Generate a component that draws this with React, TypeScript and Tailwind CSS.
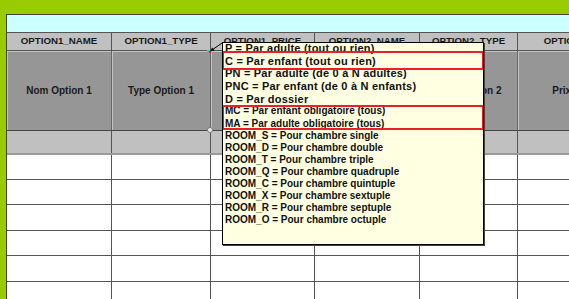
import React from "react";

const cols = [105, 99, 104, 105, 98, 130];
const headers = ["OPTION1_NAME", "OPTION1_TYPE", "OPTION1_PRICE", "OPTION2_NAME", "OPTION2_TYPE", "OPTION2_PRICE"];
const grayCells = ["Nom Option 1", "Type Option 1", "Prix option 1", "Nom Option 2", "Type Option 2", "Prix option 2"];
const whiteRows = [25, 25, 26, 25, 26, 26];

const topLines = [
  "P = Par adulte (tout ou rien)",
  "C = Par enfant (tout ou rien)",
  "PN = Par adulte (de 0 à N adultes)",
  "PNC = Par enfant (de 0 à N enfants)",
  "D = Par dossier",
];
const midLines = ["MC = Par enfant obligatoire (tous)", "MA = Par adulte obligatoire (tous)"];
const roomLines = [
  "ROOM_S = Pour chambre single",
  "ROOM_D = Pour chambre double",
  "ROOM_T = Pour chambre triple",
  "ROOM_Q = Pour chambre quadruple",
  "ROOM_C = Pour chambre quintuple",
  "ROOM_X = Pour chambre sextuple",
  "ROOM_R = Pour chambre septuple",
  "ROOM_O = Pour chambre octuple",
];

export default function App() {
  return (
    <div
      className="relative w-[569px] h-[299px] overflow-hidden bg-[#99cc00] pt-[14px] pl-[6px]"
      style={{ fontFamily: '"Liberation Sans", Arial, sans-serif' }}
    >
      <div className="h-full border-l border-t border-[#444] bg-white overflow-hidden">
        <div className="h-[18px] bg-[#ccffff] border-b border-[#555]" />
        {/* header */}
        <div className="flex h-[18px] border-b border-[#555] bg-[#c0c0c0]">
          {cols.map((w, i) => (
            <div
              key={i}
              style={{ width: w }}
              className="shrink-0 border-r border-[#555] flex items-center justify-center text-[9.7px] font-bold text-[#1a1a1a] whitespace-nowrap overflow-hidden"
            >
              {headers[i]}
            </div>
          ))}
        </div>
        {/* gray row */}
        <div className="flex h-[80px] border-b border-[#444] bg-[#969696]">
          {cols.map((w, i) => (
            <div
              key={i}
              style={{ width: w }}
              className="shrink-0 border-r border-[#666] shadow-[inset_1px_1px_0_#c4c4c4] flex items-center justify-center text-[10px] font-bold text-[#1a1a1a] whitespace-nowrap overflow-hidden"
            >
              {grayCells[i]}
            </div>
          ))}
        </div>
        {/* light gray row */}
        <div className="flex h-[24px] border-b-2 border-[#9a9a9a] bg-[#c0c0c0]">
          {cols.map((w, i) => (
            <div key={i} style={{ width: w }} className="shrink-0 border-r border-[#555]" />
          ))}
        </div>
        {whiteRows.map((h, r) => (
          <div key={r} style={{ height: h }} className="flex border-b border-[#555] bg-white">
            {cols.map((w, i) => (
              <div key={i} style={{ width: w }} className="shrink-0 border-r border-[#555]" />
            ))}
          </div>
        ))}
      </div>

      {/* comment indicator at cell corner */}
      <div className="absolute left-[207px] top-[50px] w-[3px] h-[2px] bg-[#33ccdd]" />
      <div className="absolute left-[209px] top-[51px] w-[2px] h-[2px] bg-[#e02020]" />
      {/* selection handle */}
      <div className="absolute left-[207px] top-[127px] w-[6px] h-[6px] rounded-full border border-[#777] bg-[#eee]" />

      {/* arrow */}
      <svg className="absolute left-[208px] top-[40px]" width="16" height="14" viewBox="0 0 16 14">
        <line x1="14" y1="3" x2="4" y2="10" stroke="#000" strokeWidth="1" />
        <polygon points="2,11.5 6.5,10.5 4.2,7.6" fill="#000" />
      </svg>

      {/* comment popup */}
      <div className="absolute left-[222px] top-[42px] w-[262px] h-[203px] border border-black bg-[#ffffe1] shadow-[1px_1px_0_#444] overflow-hidden">
        <div className="pl-[2px] text-[#111] -mt-[1px]">
          {topLines.map((t) => (
            <div key={t} className="h-[12.7px] leading-[12.7px] text-[11px] font-bold whitespace-nowrap tracking-[0.2px]">
              {t}
            </div>
          ))}
          {midLines.map((t) => (
            <div key={t} className="h-[12.7px] leading-[12.7px] text-[10px] font-bold whitespace-nowrap">
              {t}
            </div>
          ))}
          <div className="-mt-[0.5px]">
            {roomLines.map((t) => (
              <div key={t} className="h-[11.95px] leading-[11.95px] text-[10px] font-bold whitespace-nowrap">
                {t}
              </div>
            ))}
          </div>
        </div>
        <div className="absolute left-[-1px] top-[8px] w-[262px] h-[19px] border-2 border-[#e8202a]" />
        <div className="absolute left-[-1px] top-[62px] w-[262px] h-[25px] border-2 border-[#e8202a]" />
      </div>
    </div>
  );
}
